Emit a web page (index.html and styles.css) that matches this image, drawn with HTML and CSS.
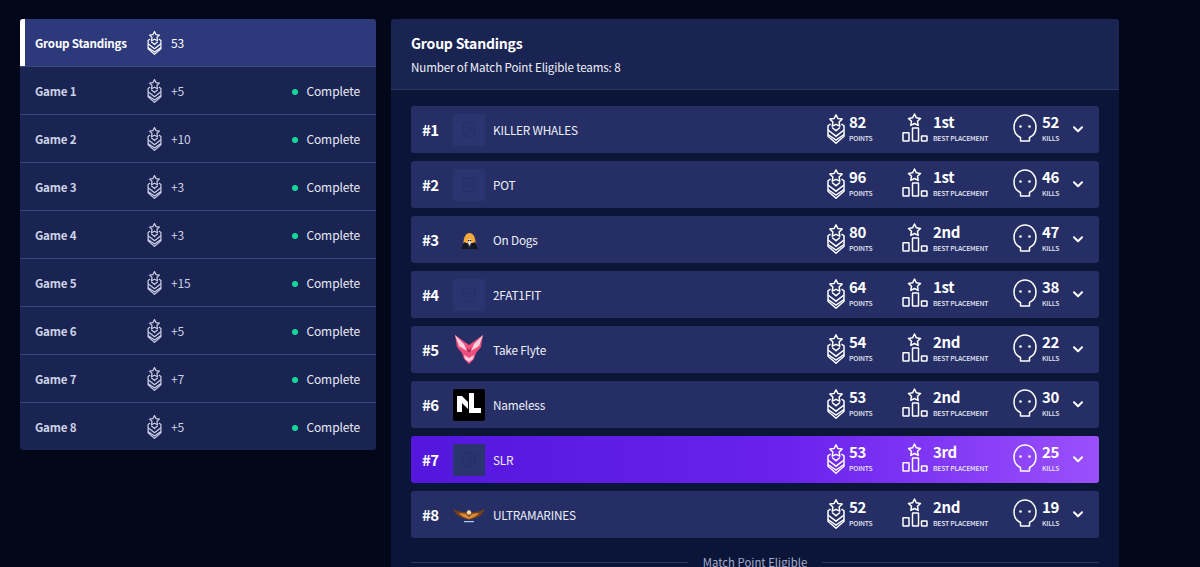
FILE: index.html
```html
<!DOCTYPE html>
<html lang="en">
<head>
    <meta charset="UTF-8">
    <meta name="viewport" content="width=device-width, initial-scale=1.0">
    <title>Group Standings</title>
    <link rel="stylesheet" href="styles.css">
</head>
<body>
    <svg class="defs" width="0" height="0">
        <symbol id="ico-points" viewBox="0 0 18 30">
            <path d="M9 .8l1.900 3.700 4.200.6-3 2.900.7 4.200L9 10.300l-3.800 1.900.7-4.200-3-2.900 4.200-.6z" fill="none" stroke="currentColor" stroke-width="1.500" stroke-linejoin="round"/>
            <path d="M3.500 10L1 11.800v10.400l8 7 8-7V11.800L14.500 10" fill="none" stroke="currentColor" stroke-width="1.500" stroke-linejoin="round"/>
            <path d="M1 16l8 6.200 8-6.200M1 20.500l8 5.700 8-5.700M5 13.500l4 3.200 4-3.200" fill="none" stroke="currentColor" stroke-width="1.500"/>
        </symbol>
        <symbol id="ico-place" viewBox="0 0 26 29">
            <path d="M12.500 1l1.900 3.800 4.100.6-3 2.900.7 4.100-3.700-1.900-3.700 1.900.7-4.100-3-2.900 4.100-.6z" fill="none" stroke="currentColor" stroke-width="1.500" stroke-linejoin="round"/>
            <rect x="1" y="19.800" width="6" height="8.200" rx=".5" fill="none" stroke="currentColor" stroke-width="1.500"/>
            <rect x="10.500" y="15" width="6" height="13" rx=".5" fill="none" stroke="currentColor" stroke-width="1.500"/>
            <rect x="19.500" y="23" width="5.500" height="5" rx=".5" fill="none" stroke="currentColor" stroke-width="1.500"/>
        </symbol>
        <symbol id="ico-skull" viewBox="0 0 24 28">
            <path d="M7.500 27h9v-3.500c3.900-1.700 6.500-5.600 6.500-10.500C23 6.400 18.100 1 12 1S1 6.400 1 13c0 4.900 2.600 8.800 6.500 10.500z" fill="none" stroke="currentColor" stroke-width="1.500" stroke-linejoin="round"/>
            <circle cx="7.500" cy="12.500" r="1.300" fill="currentColor"/>
            <circle cx="16.500" cy="12.500" r="1.300" fill="currentColor"/>
        </symbol>
        <symbol id="ico-chevron" viewBox="0 0 10 7">
            <path d="M1 1.200l4 4 4-4" fill="none" stroke="currentColor" stroke-width="2" stroke-linecap="round" stroke-linejoin="round"/>
        </symbol>
        <symbol id="ico-shield" viewBox="0 0 32 32">
            <path d="M16 8.500l6 2v6c0 3.500-2.500 5.800-6 7-3.500-1.200-6-3.500-6-7v-6z" fill="none" stroke="currentColor" stroke-width="1.400"/>
            <circle cx="16" cy="15.500" r="2.400" fill="none" stroke="currentColor" stroke-width="1.200"/>
        </symbol>
    </svg>

    <div class="page">
        <aside class="side">
            <div class="side-row active">
                <span class="side-name">Group Standings</span>
                <svg class="side-ico"><use href="#ico-points"/></svg>
                <span class="side-val">53</span>
            </div>
            <div class="side-row">
                <span class="side-name">Game 1</span>
                <svg class="side-ico"><use href="#ico-points"/></svg>
                <span class="side-val">+5</span>
                <span class="side-status"><i class="dot"></i>Complete</span>
            </div>
            <div class="side-row">
                <span class="side-name">Game 2</span>
                <svg class="side-ico"><use href="#ico-points"/></svg>
                <span class="side-val">+10</span>
                <span class="side-status"><i class="dot"></i>Complete</span>
            </div>
            <div class="side-row">
                <span class="side-name">Game 3</span>
                <svg class="side-ico"><use href="#ico-points"/></svg>
                <span class="side-val">+3</span>
                <span class="side-status"><i class="dot"></i>Complete</span>
            </div>
            <div class="side-row">
                <span class="side-name">Game 4</span>
                <svg class="side-ico"><use href="#ico-points"/></svg>
                <span class="side-val">+3</span>
                <span class="side-status"><i class="dot"></i>Complete</span>
            </div>
            <div class="side-row">
                <span class="side-name">Game 5</span>
                <svg class="side-ico"><use href="#ico-points"/></svg>
                <span class="side-val">+15</span>
                <span class="side-status"><i class="dot"></i>Complete</span>
            </div>
            <div class="side-row">
                <span class="side-name">Game 6</span>
                <svg class="side-ico"><use href="#ico-points"/></svg>
                <span class="side-val">+5</span>
                <span class="side-status"><i class="dot"></i>Complete</span>
            </div>
            <div class="side-row">
                <span class="side-name">Game 7</span>
                <svg class="side-ico"><use href="#ico-points"/></svg>
                <span class="side-val">+7</span>
                <span class="side-status"><i class="dot"></i>Complete</span>
            </div>
            <div class="side-row">
                <span class="side-name">Game 8</span>
                <svg class="side-ico"><use href="#ico-points"/></svg>
                <span class="side-val">+5</span>
                <span class="side-status"><i class="dot"></i>Complete</span>
            </div>
        </aside>

        <main class="panel">
            <header class="panel-head">
                <h1 class="panel-title">Group Standings</h1>
                <p class="panel-sub">Number of Match Point Eligible teams: 8</p>
            </header>
            <div class="teams">
                <div class="team">
                    <span class="rank">#1</span>
                    <span class="logo logo-empty"><svg><use href="#ico-shield"/></svg></span>
                    <span class="team-name">KILLER WHALES</span>
                    <div class="stat stat-points"><svg class="ico-points"><use href="#ico-points"/></svg><div><b>82</b><small>POINTS</small></div></div>
                    <div class="stat stat-place"><svg class="ico-place"><use href="#ico-place"/></svg><div><b>1st</b><small>BEST PLACEMENT</small></div></div>
                    <div class="stat stat-kills"><svg class="ico-skull"><use href="#ico-skull"/></svg><div><b>52</b><small>KILLS</small></div></div>
                    <svg class="chevron"><use href="#ico-chevron"/></svg>
                </div>
                <div class="team">
                    <span class="rank">#2</span>
                    <span class="logo logo-empty"><svg><use href="#ico-shield"/></svg></span>
                    <span class="team-name">POT</span>
                    <div class="stat stat-points"><svg class="ico-points"><use href="#ico-points"/></svg><div><b>96</b><small>POINTS</small></div></div>
                    <div class="stat stat-place"><svg class="ico-place"><use href="#ico-place"/></svg><div><b>1st</b><small>BEST PLACEMENT</small></div></div>
                    <div class="stat stat-kills"><svg class="ico-skull"><use href="#ico-skull"/></svg><div><b>46</b><small>KILLS</small></div></div>
                    <svg class="chevron"><use href="#ico-chevron"/></svg>
                </div>
                <div class="team">
                    <span class="rank">#3</span>
                    <span class="logo">
                        <svg viewBox="0 0 32 32">
                            <path d="M10.500 19c0-5.500 2.200-10 6-10s6 4.500 6 10z" fill="#f4a93a"/>
                            <path d="M8 25l3.500-7 2.500 1.500 2.500 5 2.500-5 2.500-1.500 3.500 7z" fill="#15171f"/>
                            <path d="M14.500 15h4l-.5 4-1.500 3-1.500-3z" fill="#e8dcc0"/>
                            <circle cx="15.500" cy="16.500" r=".8" fill="#2a1c10"/>
                            <circle cx="17.500" cy="16.500" r=".8" fill="#2a1c10"/>
                        </svg>
                    </span>
                    <span class="team-name">On Dogs</span>
                    <div class="stat stat-points"><svg class="ico-points"><use href="#ico-points"/></svg><div><b>80</b><small>POINTS</small></div></div>
                    <div class="stat stat-place"><svg class="ico-place"><use href="#ico-place"/></svg><div><b>2nd</b><small>BEST PLACEMENT</small></div></div>
                    <div class="stat stat-kills"><svg class="ico-skull"><use href="#ico-skull"/></svg><div><b>47</b><small>KILLS</small></div></div>
                    <svg class="chevron"><use href="#ico-chevron"/></svg>
                </div>
                <div class="team">
                    <span class="rank">#4</span>
                    <span class="logo logo-empty"><svg><use href="#ico-shield"/></svg></span>
                    <span class="team-name">2FAT1FIT</span>
                    <div class="stat stat-points"><svg class="ico-points"><use href="#ico-points"/></svg><div><b>64</b><small>POINTS</small></div></div>
                    <div class="stat stat-place"><svg class="ico-place"><use href="#ico-place"/></svg><div><b>1st</b><small>BEST PLACEMENT</small></div></div>
                    <div class="stat stat-kills"><svg class="ico-skull"><use href="#ico-skull"/></svg><div><b>38</b><small>KILLS</small></div></div>
                    <svg class="chevron"><use href="#ico-chevron"/></svg>
                </div>
                <div class="team">
                    <span class="rank">#5</span>
                    <span class="logo">
                        <svg viewBox="0 0 32 32">
                            <path d="M2 1l14 10L30 1l-2 12-5 6-2 6-5 5-5-5-2-6-5-6z" fill="#ef4d7d"/>
                            <path d="M2 1l9 9 3 7-8-5zM30 1l-9 9-3 7 8-5z" fill="#fbd0dc"/>
                            <path d="M11 21l5 3 5-3-1 4-4 3-4-3z" fill="#fbd0dc"/>
                            <path d="M14 14l2 1.500 2-1.500v3l-2 1.500-2-1.500z" fill="#b02c5a"/>
                        </svg>
                    </span>
                    <span class="team-name">Take Flyte</span>
                    <div class="stat stat-points"><svg class="ico-points"><use href="#ico-points"/></svg><div><b>54</b><small>POINTS</small></div></div>
                    <div class="stat stat-place"><svg class="ico-place"><use href="#ico-place"/></svg><div><b>2nd</b><small>BEST PLACEMENT</small></div></div>
                    <div class="stat stat-kills"><svg class="ico-skull"><use href="#ico-skull"/></svg><div><b>22</b><small>KILLS</small></div></div>
                    <svg class="chevron"><use href="#ico-chevron"/></svg>
                </div>
                <div class="team">
                    <span class="rank">#6</span>
                    <span class="logo logo-black">
                        <svg viewBox="0 0 32 32">
                            <path d="M4 7l5 0 6 6v7l-6-6v9H4z" fill="#fff"/>
                            <path d="M16 4h5v15h7v5H16z" fill="#fff"/>
                        </svg>
                    </span>
                    <span class="team-name">Nameless</span>
                    <div class="stat stat-points"><svg class="ico-points"><use href="#ico-points"/></svg><div><b>53</b><small>POINTS</small></div></div>
                    <div class="stat stat-place"><svg class="ico-place"><use href="#ico-place"/></svg><div><b>2nd</b><small>BEST PLACEMENT</small></div></div>
                    <div class="stat stat-kills"><svg class="ico-skull"><use href="#ico-skull"/></svg><div><b>30</b><small>KILLS</small></div></div>
                    <svg class="chevron"><use href="#ico-chevron"/></svg>
                </div>
                <div class="team team-own">
                    <span class="rank">#7</span>
                    <span class="logo logo-empty"><svg><use href="#ico-shield"/></svg></span>
                    <span class="team-name">SLR</span>
                    <div class="stat stat-points"><svg class="ico-points"><use href="#ico-points"/></svg><div><b>53</b><small>POINTS</small></div></div>
                    <div class="stat stat-place"><svg class="ico-place"><use href="#ico-place"/></svg><div><b>3rd</b><small>BEST PLACEMENT</small></div></div>
                    <div class="stat stat-kills"><svg class="ico-skull"><use href="#ico-skull"/></svg><div><b>25</b><small>KILLS</small></div></div>
                    <svg class="chevron"><use href="#ico-chevron"/></svg>
                </div>
                <div class="team">
                    <span class="rank">#8</span>
                    <span class="logo">
                        <svg viewBox="0 0 32 32">
                            <path d="M0 9c3 3 7 4 11 4h10c4 0 8-1 11-4-2 6-6 9-10 10l-6 2-6-2C6 18 2 15 0 9z" fill="#7a4018"/>
                            <path d="M6 14c2 .5 5 .5 7 1l3 3 3-3c2-.5 5-.5 7-1-2 3-5 4-7 5l-3 1-3-1c-2-1-5-2-7-5z" fill="#d98a3c"/>
                            <circle cx="16" cy="13.500" r="2.200" fill="#f0d8b0"/>
                            <path d="M11 22h10v1.200H11z" fill="#a8cfe0"/>
                        </svg>
                    </span>
                    <span class="team-name">ULTRAMARINES</span>
                    <div class="stat stat-points"><svg class="ico-points"><use href="#ico-points"/></svg><div><b>52</b><small>POINTS</small></div></div>
                    <div class="stat stat-place"><svg class="ico-place"><use href="#ico-place"/></svg><div><b>2nd</b><small>BEST PLACEMENT</small></div></div>
                    <div class="stat stat-kills"><svg class="ico-skull"><use href="#ico-skull"/></svg><div><b>19</b><small>KILLS</small></div></div>
                    <svg class="chevron"><use href="#ico-chevron"/></svg>
                </div>
                <div class="cutoff"><span>Match Point Eligible</span></div>
            </div>
        </main>
    </div>
</body>
</html>
```

FILE: styles.css
```css
html, body {
    height: 100%;
}
body {
    margin: 0;
    overflow: hidden;
    background: #020719;
    color: #fff;
    font-family: "Noto Sans CJK SC", "Noto Sans", sans-serif;
}
.defs {
    position: absolute;
}
.page {
    display: flex;
    align-items: flex-start;
    gap: 15px;
    padding: 19px 0 0 20px;
}

/* left column */
.side {
    width: 356px;
    flex: none;
    background: #1a2452;
    border-radius: 3px;
    overflow: hidden;
}
.side-row {
    display: flex;
    align-items: center;
    height: 47px;
    padding: 0 16px 0 15px;
    border-bottom: 1px solid #3b4678;
    font-size: 12px;
    letter-spacing: -0.1px;
    color: #ccd1e6;
}
.side-row:last-child {
    border-bottom: 0;
}
.side-row.active {
    background: #2c397b;
    box-shadow: inset 5px 0 0 #fff;
    color: #fff;
}
.side-name {
    width: 112px;
    font-size: 11.600px;
    letter-spacing: -0.2px;
    font-weight: 700;
}
.side-ico {
    width: 15px;
    height: 24px;
}
.side-val {
    margin-left: 9px;
    padding-bottom: 1px;
}
.side-status {
    display: flex;
    align-items: center;
    margin-left: auto;
    padding-bottom: 1px;
    color: #e8eaf5;
}
.dot {
    width: 6px;
    height: 6px;
    margin: 3px 8px 0 0;
    border-radius: 50%;
    background: #12d99a;
}

/* right panel */
.panel {
    width: 728px;
    flex: none;
    height: 600px;
    background: #0b1538;
    border-radius: 3px 3px 0 0;
}
.panel-head {
    height: 71px;
    padding: 0 20px;
    box-sizing: border-box;
    background: #1a2452;
    border-bottom: 1px solid #2d3762;
    border-radius: 3px 3px 0 0;
}
.panel-title {
    margin: 0;
    padding-top: 14px;
    font-size: 14px;
    letter-spacing: -0.2px;
    line-height: 20px;
    font-weight: 600;
}
.panel-sub {
    margin: 5px 0 0;
    font-size: 11.600px;
    letter-spacing: -0.14px;
    line-height: 18px;
    color: #f0f1f8;
}
.teams {
    display: flex;
    flex-direction: column;
    gap: 8px;
    padding: 16px 20px 0;
}
.team {
    display: flex;
    align-items: center;
    height: 47px;
    padding-left: 11px;
    background: #252f66;
    border-radius: 3px;
}
.team-own {
    background: linear-gradient(90deg, #5316dc 0%, #6a22ee 55%, #9a50fb 100%);
}
.rank {
    width: 31px;
    flex: none;
    font-size: 15px;
    letter-spacing: -0.5px;
    font-weight: 700;
}
.logo {
    display: block;
    width: 32px;
    height: 32px;
    flex: none;
    margin-right: 8px;
}
.logo svg {
    display: block;
    width: 32px;
    height: 32px;
}
.logo-empty {
    background: #2a3570;
    color: #26306a;
}
.logo-black {
    background: #000;
    border-radius: 2px;
}
.team-name {
    flex: 1;
    padding-bottom: 1px;
    font-size: 11.800px;
    letter-spacing: -0.2px;
    color: #eef0f9;
}
.stat {
    display: flex;
    align-items: center;
    flex: none;
}
.stat b {
    display: block;
    font-size: 15px;
    letter-spacing: -0.4px;
    line-height: 17px;
    font-weight: 700;
}
.stat small {
    display: block;
    font-size: 6.800px;
    font-weight: 500;
    line-height: 16px;
    color: #e6e8f4;
    letter-spacing: -0.2px;
}
.stat-points {
    width: 75px;
}
.stat-place {
    width: 111px;
}
.stat-kills {
    width: 60px;
}
.ico-points {
    width: 18px;
    height: 30px;
    margin: 0 4px 2px 0;
}
.ico-place {
    width: 26px;
    height: 29px;
    margin: 0 5px 4px 0;
}
.ico-skull {
    width: 24px;
    height: 28px;
    margin: 0 5px 4px 0;
}
.chevron {
    width: 10px;
    height: 7px;
    flex: none;
    margin-right: 16px;
}
.cutoff {
    display: flex;
    align-items: center;
    gap: 15px;
    margin-top: 8px;
    font-size: 11.350px;
    line-height: 16px;
    color: #a4abc8;
}
.cutoff::before,
.cutoff::after {
    content: "";
    flex: 1;
    height: 1px;
    background: #2d3762;
}
```
